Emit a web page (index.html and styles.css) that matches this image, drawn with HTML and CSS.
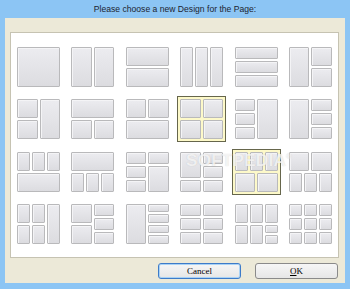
FILE: index.html
```html
<!DOCTYPE html>
<html>
<head>
<meta charset="utf-8">
<link rel="stylesheet" href="styles.css">
</head>
<body>
<div class="window">
  <div class="titlebar">Please choose a new Design for the Page:</div>
  <div class="client">
    <div class="panel">
      <div class="grid">
        <div class="tile l1"><i class="a"></i></div>
        <div class="tile l2"><i class="a"></i><i class="b"></i></div>
        <div class="tile l3"><i class="a"></i><i class="b"></i></div>
        <div class="tile l4"><i class="a"></i><i class="b"></i><i class="c"></i></div>
        <div class="tile l5"><i class="a"></i><i class="b"></i><i class="c"></i></div>
        <div class="tile l6"><i class="a"></i><i class="b"></i><i class="c"></i></div>

        <div class="tile l7"><i class="a"></i><i class="b"></i><i class="c"></i></div>
        <div class="tile l8"><i class="a"></i><i class="b"></i><i class="c"></i></div>
        <div class="tile l9"><i class="a"></i><i class="b"></i><i class="c"></i></div>
        <div class="tile l10 selected"><i class="a"></i><i class="b"></i><i class="c"></i><i class="d"></i></div>
        <div class="tile l11"><i class="a"></i><i class="b"></i><i class="c"></i><i class="d"></i></div>
        <div class="tile l12"><i class="a"></i><i class="b"></i><i class="c"></i><i class="d"></i></div>

        <div class="tile l13"><i class="a"></i><i class="b"></i><i class="c"></i><i class="d"></i></div>
        <div class="tile l14"><i class="a"></i><i class="b"></i><i class="c"></i><i class="d"></i></div>
        <div class="tile l15"><i class="a"></i><i class="b"></i><i class="c"></i><i class="d"></i><i class="e"></i></div>
        <div class="tile l16"><i class="a"></i><i class="b"></i><i class="c"></i><i class="d"></i><i class="e"></i></div>
        <div class="tile l17 selected"><i class="a"></i><i class="b"></i><i class="c"></i><i class="d"></i><i class="e"></i></div>
        <div class="tile l18"><i class="a"></i><i class="b"></i><i class="c"></i><i class="d"></i><i class="e"></i></div>

        <div class="tile l19"><i class="a"></i><i class="b"></i><i class="c"></i><i class="d"></i><i class="e"></i></div>
        <div class="tile l20"><i class="a"></i><i class="b"></i><i class="c"></i><i class="d"></i><i class="e"></i></div>
        <div class="tile l21"><i class="a"></i><i class="b"></i><i class="c"></i><i class="d"></i><i class="e"></i></div>
        <div class="tile l22"><i class="a"></i><i class="b"></i><i class="c"></i><i class="d"></i><i class="e"></i><i class="f"></i></div>
        <div class="tile l23"><i class="a"></i><i class="b"></i><i class="c"></i><i class="d"></i><i class="e"></i><i class="f"></i><i class="g"></i></div>
        <div class="tile l24"><i class="a"></i><i class="b"></i><i class="c"></i><i class="d"></i><i class="e"></i><i class="f"></i><i class="g"></i><i class="h"></i><i class="k"></i></div>
      </div>
      <div class="watermark">SOFTPEDIA<sup>®</sup></div>
    </div>
    <div class="buttons">
      <button class="btn focused">Cancel</button>
      <button class="btn"><u>O</u>K</button>
    </div>
  </div>
</div>
</body>
</html>
```
FILE: styles.css
```css
html, body {
  margin: 0;
  padding: 0;
}
body {
  width: 350px;
  height: 289px;
  background: #8cc5f4;
  overflow: hidden;
}
.window {
  display: flex;
  flex-direction: column;
  height: 289px;
}
.titlebar {
  height: 18px;
  line-height: 18px;
  text-align: center;
  font-family: "Liberation Sans", Arial, sans-serif;
  font-size: 8.6px;
  color: #1c2430;
}
.client {
  flex: 1;
  margin: 0 5px 6px 5px;
  background: #ece9d8;
  padding: 14px 6px 4px 5px;
  display: flex;
  flex-direction: column;
}
.panel {
  position: relative;
  height: 226px;
  box-sizing: border-box;
  background: #ffffff;
  border: 1px solid #c6c3b2;
  padding: 14px 6px 13px 6px;
}
.grid {
  display: grid;
  grid-template-columns: repeat(6, 43px);
  grid-template-rows: repeat(4, 40px);
  justify-content: space-between;
  align-content: space-between;
  height: 197px;
}
.tile {
  display: grid;
  gap: 2px;
  width: 43px;
  height: 40px;
}
.tile i {
  display: block;
  box-sizing: border-box;
  border: 1px solid #b9b9bb;
  border-radius: 1px;
  background: linear-gradient(#ececf0, #dcdce0);
  box-shadow: inset 1px 1px 0 #f4f4f6;
}
.tile.selected {
  background: #fdf9c9;
  box-shadow: 0 0 0 2px #fdf9c9, 0 0 0 3px #66664c;
}
.a { grid-area: a; }
.b { grid-area: b; }
.c { grid-area: c; }
.d { grid-area: d; }
.e { grid-area: e; }
.f { grid-area: f; }
.g { grid-area: g; }
.h { grid-area: h; }
.k { grid-area: k; }

.l1 { grid-template-areas: "a"; }
.l2 { grid-template-areas: "a b"; grid-template-columns: 1fr 1fr; }
.l3 { grid-template-areas: "a" "b"; grid-template-rows: 1fr 1fr; }
.l4 { grid-template-areas: "a b c"; grid-template-columns: 1fr 1fr 1fr; }
.l5 { grid-template-areas: "a" "b" "c"; grid-template-rows: 1fr 1fr 1fr; }
.l6 { grid-template-areas: "a b" "a c"; grid-template-columns: 1fr 1fr; grid-template-rows: 1fr 1fr; }

.l7 { grid-template-areas: "a c" "b c"; grid-template-columns: 1fr 1fr; grid-template-rows: 1fr 1fr; }
.l8 { grid-template-areas: "a a" "b c"; grid-template-columns: 1fr 1fr; grid-template-rows: 1fr 1fr; }
.l9 { grid-template-areas: "a b" "c c"; grid-template-columns: 1fr 1fr; grid-template-rows: 1fr 1fr; }
.l10 { grid-template-areas: "a b" "c d"; grid-template-columns: 1fr 1fr; grid-template-rows: 1fr 1fr; }
.l11 { grid-template-areas: "a d" "b d" "c d"; grid-template-columns: 1fr 1fr; grid-template-rows: 1fr 1fr 1fr; }
.l12 { grid-template-areas: "a b" "a c" "a d"; grid-template-columns: 1fr 1fr; grid-template-rows: 1fr 1fr 1fr; }

.l13 { grid-template-areas: "a b c" "d d d"; grid-template-columns: 1fr 1fr 1fr; grid-template-rows: 1fr 1fr; }
.l14 { grid-template-areas: "a a a" "b c d"; grid-template-columns: 1fr 1fr 1fr; grid-template-rows: 1fr 1fr; }
.l15 { grid-template-areas: "a b" "c e" "d e"; grid-template-columns: 1fr 1fr; grid-template-rows: 1fr 1fr 1fr; }
.l16 { grid-template-areas: "a b" "a c" "d e"; grid-template-columns: 1fr 1fr; grid-template-rows: 1fr 1fr 1fr; }
.l17 { grid-template-areas: "a a b b c c" "d d d e e e"; grid-template-columns: repeat(6, 1fr); grid-template-rows: 1fr 1fr; }
.l18 { grid-template-areas: "a a a b b b" "c c d d e e"; grid-template-columns: repeat(6, 1fr); grid-template-rows: 1fr 1fr; }

.l19 { grid-template-areas: "a b e" "c d e"; grid-template-columns: 1fr 1fr 1fr; grid-template-rows: 1fr 1fr; }
.l20 { grid-template-areas: "a c" "a c" "a d" "b d" "b e" "b e"; grid-template-columns: 1fr 1fr; grid-template-rows: repeat(6, 1fr); }
.l21 { grid-template-areas: "a b" "a c" "a d" "a e"; grid-template-columns: 1fr 1fr; grid-template-rows: repeat(4, 1fr); }
.l22 { grid-template-areas: "a b" "c d" "e f"; grid-template-columns: 1fr 1fr; grid-template-rows: 1fr 1fr 1fr; }
.l23 { grid-template-areas: "a b c" "a b c" "d e f" "d e g"; grid-template-columns: 1fr 1fr 1fr; grid-template-rows: repeat(4, 1fr); }
.l24 { grid-template-areas: "a b c" "d e f" "g h k"; grid-template-columns: 1fr 1fr 1fr; grid-template-rows: 1fr 1fr 1fr; }

.watermark {
  position: absolute;
  left: 175px;
  top: 118px;
  font-family: "Liberation Sans", Arial, sans-serif;
  font-weight: bold;
  font-size: 17px;
  letter-spacing: 0.3px;
  color: rgba(255, 255, 255, 0.75);
  text-shadow: 0 0 1px rgba(120, 120, 120, 0.35);
  pointer-events: none;
}
.watermark sup {
  font-size: 7px;
}
.buttons {
  display: flex;
  justify-content: flex-end;
  gap: 14px;
  margin-top: 5px;
  margin-right: 1px;
}
.btn {
  width: 83px;
  height: 16px;
  padding: 0;
  margin: 0;
  box-sizing: border-box;
  border: 1px solid #8a8a8a;
  border-radius: 3px;
  background: linear-gradient(#f6f6f6, #e6e6e6);
  font-family: "Liberation Serif", "Times New Roman", serif;
  font-size: 9px;
  color: #000000;
  line-height: 14px;
}
.btn.focused {
  border-color: #3d7bc9;
  box-shadow: inset 0 0 0 1px #a9d2f5;
}
```
